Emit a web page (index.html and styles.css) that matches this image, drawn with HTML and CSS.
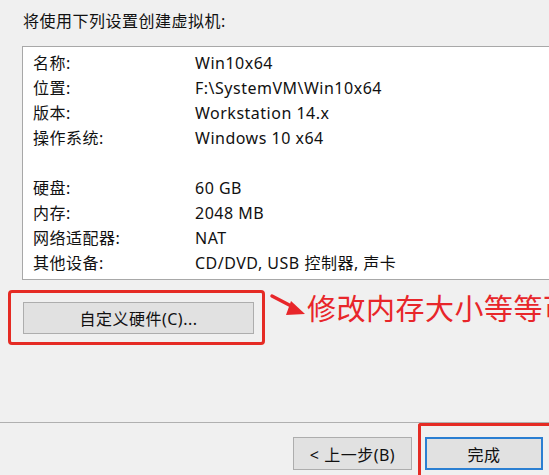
FILE: index.html
```html
<!DOCTYPE html>
<html lang="zh-CN">
<head>
<meta charset="utf-8">
<link rel="stylesheet" href="styles.css">
</head>
<body>
<div class="dialog">
  <div class="title">将使用下列设置创建虚拟机:</div>
  <div class="summary">
    <div class="row"><span class="label">名称:</span><span class="value">Win10x64</span></div>
    <div class="row"><span class="label">位置:</span><span class="value">F:\SystemVM\Win10x64</span></div>
    <div class="row"><span class="label">版本:</span><span class="value">Workstation 14.x</span></div>
    <div class="row"><span class="label">操作系统:</span><span class="value">Windows 10 x64</span></div>
    <div class="row"></div>
    <div class="row"><span class="label">硬盘:</span><span class="value">60 GB</span></div>
    <div class="row"><span class="label">内存:</span><span class="value">2048 MB</span></div>
    <div class="row"><span class="label">网络适配器:</span><span class="value">NAT</span></div>
    <div class="row"><span class="label">其他设备:</span><span class="value">CD/DVD, USB 控制器, 声卡</span></div>
  </div>
  <div class="custom-area">
    <div class="mark mark-hw"><button class="btn btn-hw">自定义硬件(C)...</button></div>
    <svg class="arrow" width="40" height="26" viewBox="0 0 40 26">
      <line x1="4" y1="4" x2="27" y2="16" stroke="#e8262a" stroke-width="3.5" stroke-linecap="round"/>
      <polygon points="23,9 37,22 18,23" fill="#e8262a"/>
    </svg>
    <span class="note">修改内存大小等等可</span>
  </div>
  <div class="footer">
    <button class="btn btn-back">&lt; 上一步(B)</button>
    <div class="mark mark-finish"><button class="btn btn-finish">完成</button></div>
  </div>
</div>
</body>
</html>
```
FILE: styles.css
```css
html, body {
  margin: 0;
  padding: 0;
  background: #f0f0f0;
  overflow: hidden;
}
.dialog {
  width: 549px;
  height: 475px;
  display: flex;
  flex-direction: column;
  font-family: "Noto Sans", "Noto Sans CJK SC", sans-serif;
  font-size: 16px;
  letter-spacing: 0.5px;
  color: #111;
  overflow: hidden;
}
.title {
  margin: 11px 0 0 23px;
  line-height: 20px;
  height: 20px;
}
.summary {
  margin: 15px -20px 0 22px;
  background: #fff;
  border: 1px solid #a8a8a8;
  padding: 4px 0 3px 10px;
}
.row {
  display: flex;
  height: 25px;
  line-height: 25px;
  white-space: nowrap;
}
.label {
  width: 162px;
}
.value {
  flex: 1;
}
.custom-area {
  display: flex;
  align-items: flex-start;
  margin-top: 10px;
}
.mark {
  border: 3px solid #e52b24;
  border-radius: 4px;
  box-sizing: border-box;
}
.mark-hw {
  margin-left: 8px;
  width: 257px;
  height: 55px;
  padding: 9px 8px 0 12px;
}
.btn {
  font-family: "Noto Sans", "Noto Sans CJK SC", sans-serif;
  font-size: 16px;
  letter-spacing: 0.5px;
  color: #111;
  background: #e1e1e1;
  border: 1px solid #adadad;
  margin: 0;
  padding: 0;
  box-sizing: border-box;
  display: flex;
  align-items: center;
  justify-content: center;
}
.btn-hw {
  width: 231px;
  height: 32px;
}
.arrow {
  margin: 2px 0 0 3px;
  flex: none;
}
.note {
  margin: 0 0 0 -1px;
  font-family: "Noto Sans CJK SC", sans-serif;
  font-size: 29px;
  letter-spacing: 0.5px;
  line-height: 34px;
  color: #e8262a;
  white-space: nowrap;
}
.footer {
  margin-top: auto;
  height: 52px;
  border-top: 1px solid #b0b0b0;
  display: flex;
  justify-content: flex-end;
  align-items: flex-start;
}
.btn-back {
  margin-top: 14px;
  width: 119px;
  height: 33px;
}
.mark-finish {
  margin-left: 6px;
  width: 131px;
  height: 60px;
  padding: 11px 3px 0 4px;
  border-radius: 3px 0 0 0;
  border-right: none;
}
.btn-finish {
  width: 118px;
  height: 33px;
  border: 2px solid #2b7fd2;
}
```
